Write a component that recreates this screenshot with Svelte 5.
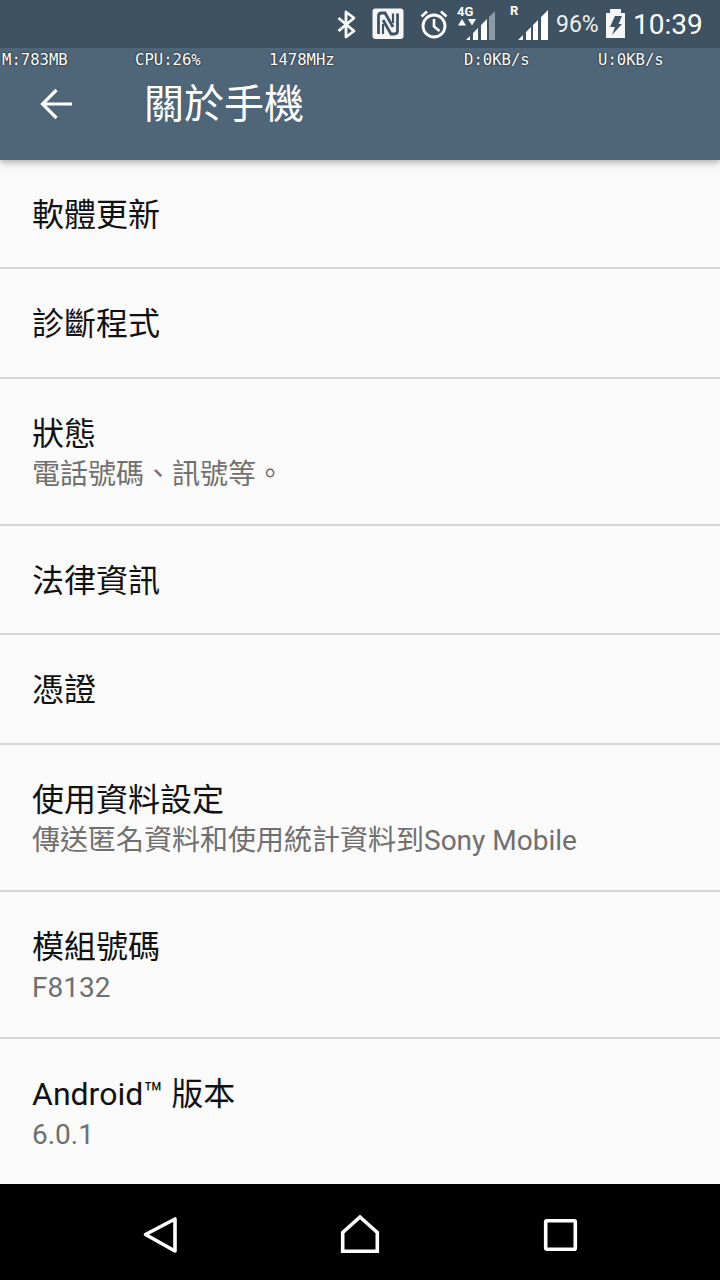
<script>
  const rows = [
    { t: '軟體更新', h: 109 },
    { t: '診斷程式', h: 110 },
    { t: '狀態', s: '電話號碼、訊號等。', h: 147 },
    { t: '法律資訊', h: 109 },
    { t: '憑證', h: 110 },
    { t: '使用資料設定', s: '傳送匿名資料和使用統計資料到Sony Mobile', h: 147 },
    { t: '模組號碼', s: 'F8132', h: 147 },
    { t: 'Android™ 版本', s: '6.0.1', h: 145, last: true }
  ];
</script>

<div class="page">
  <header class="top">
    <div class="status">
      <svg class="sb" width="390" height="48" viewBox="330 0 390 48">
        <path d="M338.500 18 L354 31 L346 37 V12 L354 18 L338.500 31" fill="none" stroke="#fff" stroke-width="2.800" stroke-linejoin="round" />
        <rect x="372.500" y="8.500" width="31" height="30.500" rx="3" fill="#f4f6f7" />
        <path d="M378.500 34 V16 Q378.500 13 382 13 H385 L393 27 M397.500 13.500 V31 Q397.500 34 394 34 H391 L383 20" fill="none" stroke="#3e5261" stroke-width="2.800" />
        <path d="M383 34 V24 M393 13.500 V23" fill="none" stroke="#3e5261" stroke-width="2.200" />
        <circle cx="434" cy="26" r="11" fill="none" stroke="#fff" stroke-width="2.800" />
        <path d="M434 19 V26.500 L439.500 31 M421.500 16.500 L427 11.500 M446.500 16.500 L441 11.500" fill="none" stroke="#fff" stroke-width="2.600" />
        <path d="M458 25.500 L462 19 L466 25.500 Z M468 19 H476 L472 25.500 Z" fill="#fff" />
        <path d="M466 40 L470 36 V40 Z M473 40 V33 L478 28 V40 Z M481 40 V25 L487 19 V40 Z" fill="#fff" />
        <path d="M489 40 V17 L495 11 V40 Z" fill="#8b9aa5" />
        <path d="M518 40 L523 35 V40 Z M526 40 V32 L531 27 V40 Z M533 40 V25 L538 20 V40 Z M541 40 V17 L548 10 V40 Z" fill="#fff" />
        <path d="M610 9 V13 H606 V38 H625 V13 H621 V9 Z" fill="#f4f6f7" />
        <path d="M615 16 H622 L618.500 24 H622 L612 35 L615 27 H610 Z" fill="#3e5261" />
      </svg>
      <span class="small g4">4G</span>
      <span class="small r">R</span>
      <span class="pct">96%</span>
      <span class="time">10:39</span>
    </div>
    <div class="stats">
      <span class="m">M:783MB</span>
      <span class="cpu">CPU:26%</span>
      <span class="mhz">1478MHz</span>
      <span class="d">D:0KB/s</span>
      <span class="u">U:0KB/s</span>
    </div>
    <div class="bar">
      <svg class="back" width="36" height="36" viewBox="0 0 36 36">
        <path d="M34 17 H5 M18.500 3 L4.500 17 L18.500 31" fill="none" stroke="#fff" stroke-width="3.200" />
      </svg>
      <h1>關於手機</h1>
    </div>
  </header>

  <main class="list">
    {#each rows as r}
      <div class="row" class:two={r.s} class:last={r.last} style="height:{r.h}px">
        <div class="title">{r.t}</div>
        {#if r.s}<div class="sub">{r.s}</div>{/if}
      </div>
    {/each}
  </main>

  <nav class="nav">
    <svg width="40" height="40" viewBox="0 0 40 40">
      <path d="M35 4 V36 L5.500 19.500 Z" fill="none" stroke="#fff" stroke-width="3.600" stroke-linejoin="round" />
    </svg>
    <svg width="40" height="40" viewBox="0 0 40 40">
      <path d="M20 2 L37.300 17.500 V36.300 H2.700 V17.500 Z" fill="none" stroke="#fff" stroke-width="3.600" />
    </svg>
    <svg width="40" height="40" viewBox="0 0 40 40">
      <rect x="5.700" y="5.700" width="29.600" height="28.600" rx="1" fill="none" stroke="#fff" stroke-width="3.600" />
    </svg>
  </nav>
</div>

<style>
  :global(body) {
    margin: 0;
    background: #fafafa;
  }
  .page {
    width: 720px;
    height: 1280px;
    display: flex;
    flex-direction: column;
    overflow: hidden;
    font-family: Roboto, "Noto Sans CJK TC", sans-serif;
  }
  .top {
    height: 160px;
    flex: none;
    background: #4f6578;
    box-shadow: 0 2px 8px rgba(0, 0, 0, 0.35);
    position: relative;
    z-index: 1;
  }
  .status {
    height: 48px;
    background: #3e5261;
    position: relative;
    color: #fff;
  }
  .sb {
    position: absolute;
    left: 330px;
    top: 0;
  }
  .small {
    position: absolute;
    font: bold 13px/12px Roboto, sans-serif;
  }
  .g4 { left: 457px; top: 6px; }
  .r { left: 510px; top: 5px; }
  .pct {
    position: absolute;
    left: 556px;
    top: 10px;
    font-size: 23px;
    line-height: 30px;
    color: #f0f2f3;
  }
  .time {
    position: absolute;
    left: 633px;
    top: 8px;
    font-size: 28px;
    line-height: 34px;
  }
  .stats {
    height: 24px;
    position: relative;
    font: 15.600px/24px "DejaVu Sans Mono", monospace;
    color: #fff;
    text-shadow: 0 0 2px #000;
  }
  .stats span { position: absolute; top: 0; }
  .m { left: 2px; }
  .cpu { left: 135px; }
  .mhz { left: 269px; }
  .d { left: 464px; }
  .u { left: 598px; }
  .bar {
    display: flex;
    align-items: center;
    height: 64px;
    padding-left: 38px;
    gap: 70px;
    margin-top: 1px;
  }
  h1 {
    margin: 0;
    font-size: 40px;
    font-weight: 400;
    line-height: 48px;
    color: #fff;
  }
  .list {
    flex: 1;
    background: #fafafa;
  }
  .row {
    box-sizing: border-box;
    padding: 2px 32px 0;
    border-bottom: 2px solid #d6d6d6;
    display: flex;
    flex-direction: column;
    justify-content: center;
  }
  .row.two { padding-top: 4px; }
  .row.last { border-bottom: 0; }
  .title {
    font-size: 32px;
    line-height: 40px;
    color: #111;
  }
  .sub {
    font-size: 28px;
    line-height: 36px;
    color: #6f6f6f;
    margin-top: 3px;
  }
  .nav {
    height: 96px;
    box-sizing: border-box;
    flex: none;
    background: #000;
    display: flex;
    justify-content: space-between;
    align-items: center;
    padding: 6px 140px 0;
  }
</style>
